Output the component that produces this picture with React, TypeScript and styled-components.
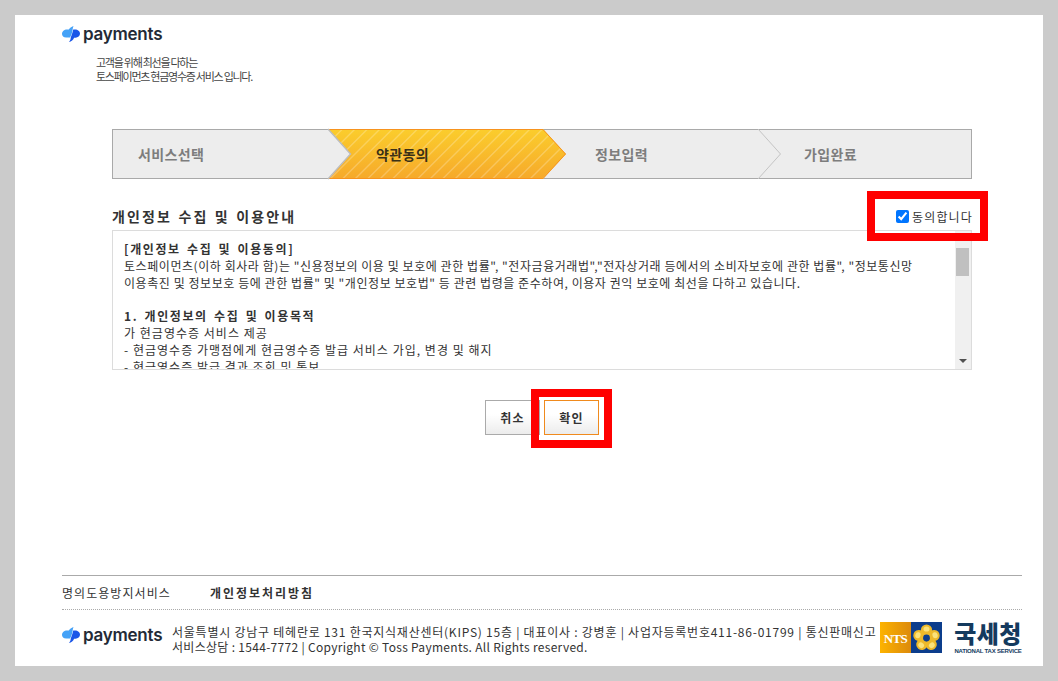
import React from 'react';
import styled, { createGlobalStyle } from 'styled-components';

const GlobalStyle = createGlobalStyle`
  html, body {
    margin: 0;
    padding: 0;
    background: #cbcbcb;
  }
  body {
    font-family: 'Noto Sans CJK KR', 'Liberation Sans', sans-serif;
    font-size: 12px;
    color: #333;
  }
`;

const Page = styled.div`
  box-sizing: border-box;
  width: 1028px;
  height: 651px;
  margin: 15px 0 0 15px;
  padding: 0 21px 0 47px;
  background: #fff;
  display: flex;
  flex-direction: column;
  overflow: hidden;
`;

const Header = styled.header`
  padding-top: 11px;
  height: 103px;
  flex: none;
`;

const LogoRow = styled.div`
  display: flex;
  align-items: center;
  height: 16px;
  gap: 3px;
`;

const LogoText = styled.span`
  font-family: Inter, 'Liberation Sans', sans-serif;
  font-size: 17px;
  font-weight: 600;
  line-height: 16px;
  letter-spacing: -0.25px;
  color: #232a36;
`;

const Tagline = styled.p`
  margin: 13px 0 0 34px;
  font-size: 11px;
  line-height: 14px;
  letter-spacing: -1.26px;
  color: #444;
`;

const Content = styled.main`
  margin-left: 50px;
  width: 860px;
  flex: none;
`;

const StepBar = styled.ol`
  list-style: none;
  margin: 0;
  padding: 0;
  display: grid;
  grid-template-columns: 215px 238px 192px 213px;
  height: 50px;
  box-sizing: border-box;
  background: #ededed;
  border: 1px solid #a9a9a9;
`;

const Step = styled.li<{ $active?: boolean; $inset: number }>`
  position: relative;
  margin: -1px 0;
  padding-left: ${({ $inset }) => $inset}px;
  display: flex;
  align-items: center;
  font-size: 14px;
  font-weight: 700;
  letter-spacing: 0.35px;
  color: ${({ $active }) => ($active ? '#3a3117' : '#7d7d7d')};
`;

const StepLabel = styled.span`
  position: relative;
`;

const StepShape = styled.svg`
  position: absolute;
  left: 0;
  top: 0;
  overflow: visible;
`;

const TitleRow = styled.div`
  display: flex;
  justify-content: space-between;
  align-items: center;
  margin-top: 26px;
  height: 25px;
  padding-bottom: 3px;
  box-sizing: border-box;
`;

const Title = styled.h2`
  margin: 0;
  font-size: 14px;
  font-weight: 700;
  letter-spacing: 2.15px;
  word-spacing: 1px;
  color: #333;
`;

const AgreeLabel = styled.label`
  display: flex;
  align-items: center;
  gap: 3px;
  font-size: 12px;
  letter-spacing: 1.15px;
  color: #333;
  margin-right: -1px;
`;

const AgreeBox = styled.input`
  width: 13px;
  height: 13px;
  margin: 0;
`;

const TermsBox = styled.div`
  box-sizing: border-box;
  height: 140px;
  border: 1px solid #dcdcdc;
  display: flex;
`;

const TermsText = styled.div`
  flex: 1;
  min-width: 0;
  padding: 9px 0 0 11px;
  overflow: hidden;
  font-size: 12px;
  line-height: 17px;
  color: #333;
  white-space: nowrap;
`;

const TermsLine = styled.div<{ $wide?: boolean }>`
  letter-spacing: ${({ $wide }) => ($wide ? '1.02px' : '0.56px')};
`;

const TermsHeading = styled.strong`
  display: block;
  font-weight: 700;
  letter-spacing: 1.6px;
  word-spacing: 2px;
`;

const TermsGap = styled.div`
  height: 16px;
`;

const ScrollTrack = styled.div`
  flex: none;
  width: 16px;
  background: #f0f0f0;
  display: flex;
  flex-direction: column;
  align-items: center;
`;

const ScrollButton = styled.svg`
  flex: none;
  margin: 6px 0;
`;

const ScrollThumb = styled.div`
  flex: none;
  width: 13px;
  height: 28px;
  margin: 1px 1px 0 0;
  background: #c0c0c0;
`;

const ScrollSpace = styled.div`
  flex: 1;
`;

const Actions = styled.div`
  display: flex;
  justify-content: center;
  gap: 4px;
  margin-top: 30px;
`;

const Button = styled.button<{ $primary?: boolean }>`
  position: relative;
  box-sizing: border-box;
  width: 55px;
  height: 35px;
  padding: 0;
  border: 1px solid ${({ $primary }) => ($primary ? '#f08a1d' : '#aaa')};
  background: linear-gradient(#fff 40%, #ececec);
  font-family: inherit;
  font-size: 12px;
  font-weight: 700;
  letter-spacing: 1.2px;
  color: #333;
`;

const Highlight = styled.span<{ $x: number; $y: number; $w: number; $h: number }>`
  position: absolute;
  box-sizing: border-box;
  left: ${({ $x }) => $x}px;
  top: ${({ $y }) => $y}px;
  width: ${({ $w }) => $w}px;
  height: ${({ $h }) => $h}px;
  border: 8px solid #f00;
  pointer-events: none;
`;

const Footer = styled.footer`
  margin-top: auto;
  height: 91px;
  box-sizing: border-box;
  flex: none;
  border-top: 1px solid #aaa;
`;

const FooterLinks = styled.nav`
  display: flex;
  align-items: center;
  height: 34px;
  box-sizing: border-box;
  border-bottom: 1px dotted #aaa;
  font-size: 12px;
`;

const FooterLink = styled.a<{ $strong?: boolean }>`
  color: #333;
  width: ${({ $strong }) => ($strong ? 'auto' : '148px')};
  font-weight: ${({ $strong }) => ($strong ? 700 : 400)};
  letter-spacing: ${({ $strong }) => ($strong ? '1.95px' : '1.05px')};
`;

const FooterBody = styled.div`
  display: flex;
  align-items: flex-start;
  padding-top: 12px;
`;

const FooterLogo = styled(LogoRow)`
  margin-top: 5px;
  width: 110px;
  flex: none;
`;

const Address = styled.address`
  flex: none;
  width: 708px;
  font-style: normal;
  font-size: 12px;
  line-height: 15px;
  white-space: nowrap;
  color: #333;
  padding-top: 2px;
`;

const AddressLine = styled.div<{ $wide?: boolean }>`
  letter-spacing: ${({ $wide }) => ($wide ? '0.76px' : '0.3px')};
`;

const NtsMark = styled.div`
  display: flex;
  width: 62px;
  height: 31px;
  flex: none;
`;

const NtsLabel = styled.span`
  width: 31px;
  display: flex;
  align-items: center;
  justify-content: center;
  padding-top: 3px;
  box-sizing: border-box;
  background: linear-gradient(90deg, #fdb300, #dc8a0c);
  font-family: 'Liberation Serif', serif;
  font-weight: 700;
  font-size: 13px;
  letter-spacing: -0.6px;
  color: #fff;
`;

const NtsEmblem = styled.span`
  width: 31px;
  height: 31px;
  display: block;
  background: #0c3d8c;
`;

const NtsName = styled.div`
  margin-left: 12px;
  width: 68px;
  flex: none;
  color: #143a5e;
  text-align: center;
`;

const NtsKorean = styled.div`
  font-size: 24px;
  font-weight: 900;
  line-height: 24px;
  letter-spacing: 0.4px;
  margin-top: -1px;
`;

const NtsEnglish = styled.div`
  font-family: 'Liberation Sans', sans-serif;
  font-size: 6px;
  font-weight: 700;
  line-height: 7px;
  margin-top: 3px;
  letter-spacing: -0.22px;
  white-space: nowrap;
`;

const Logo = () => (
  <svg width="18" height="16" viewBox="0 0 18 16">
    <path d="M11.5 0C9.4.7 7.6 2.2 6.8 3.6H5C2.2 3.6 0 5.6 0 7.9c0 1.7 1.5 3.6 4.1 3.6H8c.9-1.4 2-3.9 2.5-6.9.2-1.7.5-3.4 1-4.6z" fill="#45a2f7" />
    <path d="M10.2 3.6H13c2.8 0 5 1.9 5 4.2 0 2.2-2.1 3.9-4.4 3.9h-1.5c-.7 2.1-2.7 3.7-5.3 4.3 1.4-1.3 1.9-2.7 1.9-4.2.9-2.3 2-5.3 2.5-8.2z" fill="#1a56e8" />
  </svg>
);

const StepChevron = () => (
  <StepShape width="24" height="50">
    <path d="M0 0 L22.5 25 L0 50" fill="#ededed" stroke="#c4c4c4" strokeWidth="1" />
  </StepShape>
);

const stripes = Array.from({ length: 26 }, (_, i) => i * 12.5 - 48);

const ActiveShape = () => (
  <StepShape width="238" height="50">
    <defs>
      <linearGradient id="stepFill" x1="0" y1="0" x2="0" y2="1">
        <stop offset="0" stopColor="#fbcd2c" />
        <stop offset="1" stopColor="#f6a92b" />
      </linearGradient>
      <clipPath id="stepClip">
        <path d="M0 0 H215 L238 25 L215 50 H0 L22.5 25 Z" />
      </clipPath>
    </defs>
    <g clipPath="url(#stepClip)">
      <rect width="238" height="50" fill="url(#stepFill)" />
      {stripes.map((x) => (
        <path key={x} d={`M${x} 50 L${x + 50} 0`} stroke="#fff" strokeOpacity="0.24" strokeWidth="1.4" />
      ))}
    </g>
    <path d="M0 0.5 H215 L237.5 25 L215 49.5 H0" fill="none" stroke="#f7931e" strokeWidth="1" />
    <path d="M0 0 L22.5 25 L0 50" fill="none" stroke="#bdbdbd" strokeWidth="1.4" />
  </StepShape>
);

const petals = [0, 72, 144, 216, 288];

const Emblem = () => (
  <NtsEmblem>
    <svg width="31" height="31" viewBox="0 0 31 31">
      {petals.map((deg) => (
        <g key={deg} transform={`rotate(${deg} 15.5 16)`}>
          <circle cx="15.5" cy="8" r="5.6" fill="#edb92a" />
          <ellipse cx="15.5" cy="7" rx="3" ry="2.6" fill="#fbe27a" />
        </g>
      ))}
      <circle cx="15.5" cy="16" r="3.4" fill="#0c3d8c" />
    </svg>
  </NtsEmblem>
);

export default function App() {
  return (
    <>
      <GlobalStyle />
      <Page>
        <Header>
          <LogoRow>
            <Logo />
            <LogoText>payments</LogoText>
          </LogoRow>
          <Tagline>
            고객을 위해 최선을 다하는
            <br />
            토스페이먼츠 현금영수증 서비스 입니다.
          </Tagline>
        </Header>

        <Content>
          <StepBar>
            <Step $inset={25}>
              <StepLabel>서비스선택</StepLabel>
            </Step>
            <Step $active $inset={48}>
              <ActiveShape />
              <StepLabel>약관동의</StepLabel>
            </Step>
            <Step $inset={29}>
              <StepLabel>정보입력</StepLabel>
            </Step>
            <Step $inset={46}>
              <StepChevron />
              <StepLabel>가입완료</StepLabel>
            </Step>
          </StepBar>

          <TitleRow>
            <Title>개인정보 수집 및 이용안내</Title>
            <AgreeLabel>
              <AgreeBox type="checkbox" defaultChecked />
              동의합니다
            </AgreeLabel>
          </TitleRow>

          <TermsBox>
            <TermsText>
              <TermsHeading>[개인정보 수집 및 이용동의]</TermsHeading>
              <TermsLine>토스페이먼츠(이하 회사라 함)는 "신용정보의 이용 및 보호에 관한 법률", "전자금융거래법","전자상거래 등에서의 소비자보호에 관한 법률", "정보통신망</TermsLine>
              <TermsLine>이용촉진 및 정보보호 등에 관한 법률" 및 "개인정보 보호법" 등 관련 법령을 준수하여, 이용자 권익 보호에 최선을 다하고 있습니다.</TermsLine>
              <TermsGap />
              <TermsHeading>1. 개인정보의 수집 및 이용목적</TermsHeading>
              <TermsLine $wide>가 현금영수증 서비스 제공</TermsLine>
              <TermsLine $wide>- 현금영수증 가맹점에게 현금영수증 발급 서비스 가입, 변경 및 해지</TermsLine>
              <TermsLine $wide>- 현금영수증 발급 결과 조회 및 통보</TermsLine>
            </TermsText>
            <ScrollTrack>
              <ScrollButton width="8" height="4" viewBox="0 0 8 4">
                <path d="M4 0l4 4H0z" fill="#606060" />
              </ScrollButton>
              <ScrollThumb />
              <ScrollSpace />
              <ScrollButton width="8" height="4" viewBox="0 0 8 4">
                <path d="M0 0h8L4 4z" fill="#505050" />
              </ScrollButton>
            </ScrollTrack>
          </TermsBox>

          <Actions>
            <Button type="button">취소</Button>
            <Button type="button" $primary>
              확인
            </Button>
          </Actions>
        </Content>

        <Footer>
          <FooterLinks>
            <FooterLink>명의도용방지서비스</FooterLink>
            <FooterLink $strong>개인정보처리방침</FooterLink>
          </FooterLinks>
          <FooterBody>
            <FooterLogo>
              <Logo />
              <LogoText>payments</LogoText>
            </FooterLogo>
            <Address>
              <AddressLine $wide>서울특별시 강남구 테헤란로 131 한국지식재산센터(KIPS) 15층 | 대표이사 : 강병훈 | 사업자등록번호411-86-01799 | 통신판매신고</AddressLine>
              <AddressLine>서비스상담 : 1544-7772 | Copyright © Toss Payments. All Rights reserved.</AddressLine>
            </Address>
            <NtsMark>
              <NtsLabel>NTS</NtsLabel>
              <Emblem />
            </NtsMark>
            <NtsName>
              <NtsKorean>국세청</NtsKorean>
              <NtsEnglish>NATIONAL TAX SERVICE</NtsEnglish>
            </NtsName>
          </FooterBody>
        </Footer>
      </Page>
      <Highlight $x={867} $y={191} $w={121} $h={50} />
      <Highlight $x={531} $y={389} $w={81} $h={59} />
    </>
  );
}
